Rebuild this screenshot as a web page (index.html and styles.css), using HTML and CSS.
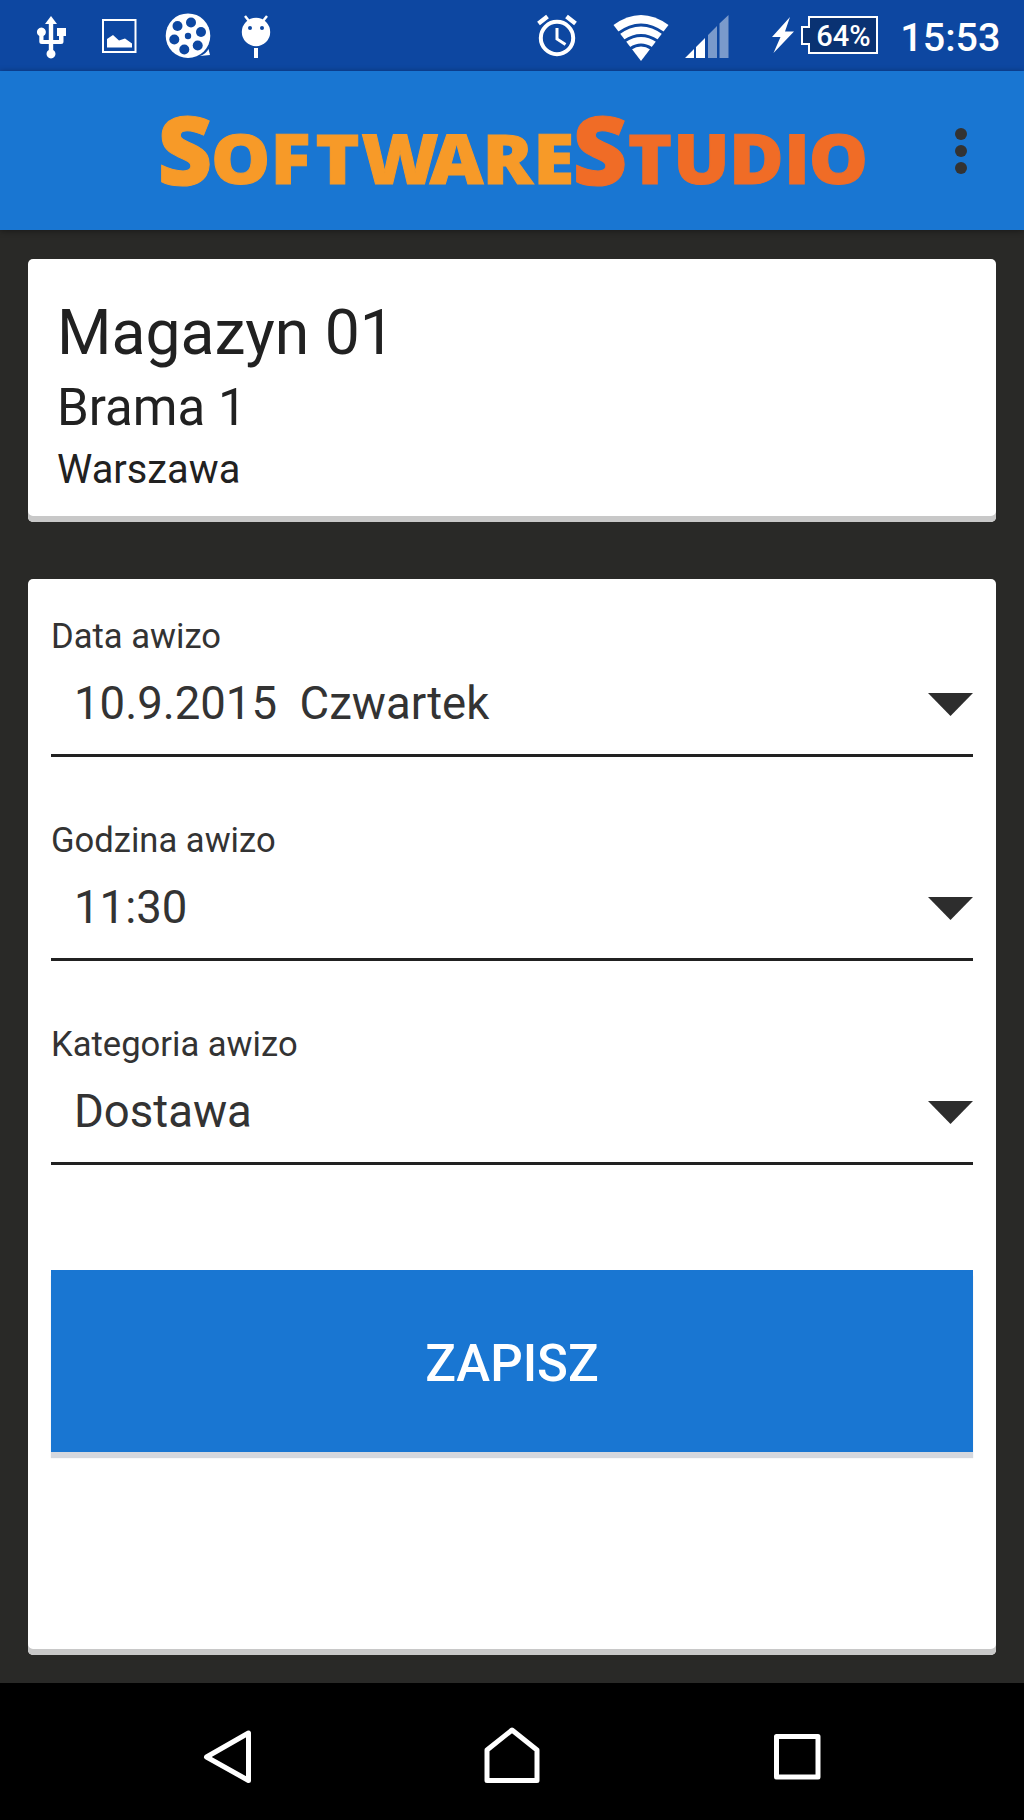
FILE: index.html
```html
<!DOCTYPE html>
<html lang="pl">
<head>
  <meta charset="UTF-8" />
  <meta name="viewport" content="width=device-width, initial-scale=1.0" />
  <title>Awizo - SoftwareStudio</title>
  <link rel="stylesheet" href="styles.css">
</head>
<body>
  <div class="status-bar">
    <svg class="status-icons" width="300" height="71" viewBox="0 0 300 71" fill="#fff">
      <!-- usb -->
      <path d="M51 16l6 8h-3.800v16h5.800v-4h-2v-8h9v8h-2.500v5.500q0 2.500-2.500 2.500h-7.800v6a4.500 4.500 0 1 1-4.400 0v-6h-7q-2.500 0-2.500-2.500v-5.500a4.500 4.500 0 1 1 4.200 0v4h5.300v-16h-3.800z"/>
      <!-- picture -->
      <rect x="103" y="20" width="32.500" height="32" fill="none" stroke="#fff" stroke-width="2"/>
      <path d="M107 47.500v-8.500l6-4 6 5.500 6-2 7 5v4z"/>
      <!-- film reel -->
      <circle cx="188" cy="35.700" r="22.300"/>
      <path d="M200 56q6-2 8.500-7l1.500 6z"/>
      <g fill="#0d47a1">
        <circle cx="191" cy="22.500" r="5"/>
        <circle cx="201" cy="32" r="5"/>
        <circle cx="197.700" cy="45.500" r="5"/>
        <circle cx="184.300" cy="49.500" r="5"/>
        <circle cx="174.300" cy="39.500" r="5"/>
        <circle cx="177.500" cy="26" r="5"/>
        <circle cx="188" cy="36" r="3.200"/>
      </g>
      <!-- android on a stick -->
      <circle cx="256" cy="32" r="14.200"/>
      <path d="M245 16l4 5M267 16l-4 5" stroke="#fff" stroke-width="2.500"/>
      <path d="M256 48v10" stroke="#fff" stroke-width="4"/>
      <circle cx="250" cy="28" r="2" fill="#0d47a1"/>
      <circle cx="262" cy="28" r="2" fill="#0d47a1"/>
    </svg>

    <div class="status-right">
      <svg width="40" height="44" viewBox="0 0 40 44" fill="none" stroke="#fff">
        <circle cx="20" cy="24" r="16.200" stroke-width="4"/>
        <path d="M20 14v11l8.500 5.500" stroke-width="3"/>
        <path d="M1.500 9.500l9-7M38.500 9.500l-9-7" stroke-width="4.500"/>
      </svg>
      <svg class="wifi" width="56" height="48" viewBox="0 0 56 48">
        <path d="M28 47L.5 11Q28-9 55.500 11z" fill="#fff"/>
        <path d="M5 19.500q23-17 46 0M11.500 27q16.500-11 33 0M17.500 34.500q10.500-7 21 0" fill="none" stroke="#0d47a1" stroke-width="2.800"/>
      </svg>
      <svg class="signal" width="44" height="43" viewBox="0 0 44 43" fill="#fff">
        <path d="M0 43l9-9v9zM11 43V32l9-9v20z"/>
        <path d="M23 43V20l9-9v32zM34.500 43V8.500L43.500 0v43z" opacity=".45"/>
      </svg>
      <svg class="bolt" width="22" height="36" viewBox="0 0 22 36" fill="#fff">
        <path d="M18 0L0 20h8.500L1.500 36 22 14.500H13z"/>
      </svg>
      <div class="battery">
        <svg class="battery-frame" width="77" height="38" viewBox="0 0 77 38">
          <path d="M8 1h68v36H8v-9H1V11h7z" fill="#0a3272" stroke="#fff" stroke-width="2"/>
        </svg>
        <span class="battery-text">64%</span>
      </div>
      <span class="clock">15:53</span>
    </div>
  </div>

  <header class="app-bar">
    <svg class="logo" width="706" height="90" viewBox="0 0 706 90">
      <g class="logo-software">
        <text class="big" x="26" y="74.500">S</text>
        <text transform="scale(1.080 1)" x="75.600 121.800 165.300 223.200 275.500 323 365.500" y="74.500">OFTWARE</text>
      </g>
      <g class="logo-studio">
        <text class="big" x="441" y="74.500">S</text>
        <text transform="scale(1.080 1)" x="454.600 502.300 553 590.700 629.200" y="74.500">TUDIO</text>
      </g>
    </svg>
    <div class="menu">
      <span class="dot"></span>
      <span class="dot"></span>
      <span class="dot"></span>
    </div>
  </header>

  <main class="content">
    <section class="card place">
      <h1>Magazyn 01</h1>
      <h2>Brama 1</h2>
      <p>Warszawa</p>
    </section>

    <section class="card form">
      <div class="field">
        <div class="label">Data awizo</div>
        <div class="select"><span>10.9.2015&nbsp; Czwartek</span><i class="arrow"></i></div>
      </div>
      <div class="field">
        <div class="label">Godzina awizo</div>
        <div class="select"><span>11:30</span><i class="arrow"></i></div>
      </div>
      <div class="field">
        <div class="label">Kategoria awizo</div>
        <div class="select"><span>Dostawa</span><i class="arrow"></i></div>
      </div>
      <button type="submit">ZAPISZ</button>
    </section>
  </main>

  <nav class="nav-bar">
    <svg width="60" height="60" viewBox="0 0 60 60"><path d="M51.500 9v47.500L9.500 33z"/></svg>
    <svg width="60" height="60" viewBox="0 0 60 60"><path d="M5 56.500V26L30 6l25 20v30.500z"/></svg>
    <svg width="60" height="60" viewBox="0 0 60 60"><path d="M9.500 12.500h41.500v40.500H9.500z"/></svg>
  </nav>
</body>
</html>
```
FILE: styles.css
```css
* {
  box-sizing: border-box;
}
body {
  margin: 0;
  width: 1024px;
  height: 1820px;
  display: flex;
  flex-direction: column;
  font-family: Roboto, sans-serif;
  background: #292927;
  color: #212121;
  overflow: hidden;
}
svg {
  display: block;
}

/* system status bar */
.status-bar {
  height: 71px;
  display: flex;
  justify-content: space-between;
  background: #0d47a1;
  color: #fff;
}
.status-right {
  display: flex;
  align-items: flex-start;
  padding-top: 14px;
  padding-right: 23.5px;
}
.wifi {
  margin-left: 36px;
}
.signal {
  margin-top: 1px;
  margin-left: 16px;
}
.bolt {
  margin-top: 3px;
  margin-left: 43px;
}
.battery {
  position: relative;
  width: 77px;
  margin-top: 2px;
  margin-left: 7.5px;
}
.battery-text {
  position: absolute;
  top: 3px;
  left: 15px;
  font-size: 29px;
  line-height: 34px;
  font-weight: 500;
}
.clock {
  margin-left: 22px;
  font-size: 39.5px;
  line-height: 47px;
  font-weight: 500;
}

/* app bar */
.app-bar {
  height: 159px;
  display: flex;
  align-items: flex-start;
  justify-content: space-between;
  padding: 39px 57px 0 159px;
  background: #1976d2;
  box-shadow: 0 1px 6px rgba(0, 0, 0, 0.4);
}
.logo {
  overflow: visible;
  font-family: 'Open Sans', sans-serif;
  font-weight: 800;
  font-size: 69px;
  text-anchor: middle;
  stroke-width: 1px;
}
.logo .big {
  font-size: 95px;
}
.logo-software {
  fill: #f79a28;
  stroke: #f79a28;
}
.logo-studio {
  fill: #f06c26;
  stroke: #f06c26;
}
.menu {
  display: flex;
  flex-direction: column;
  gap: 5px;
  padding-top: 18px;
}
.dot {
  width: 12px;
  height: 12px;
  border-radius: 50%;
  background: #333;
}

/* cards */
.content {
  flex: 1;
  padding: 29px 28.5px 28px 28px;
  display: flex;
  flex-direction: column;
  gap: 57px;
}
.card {
  background: #fff;
  border-radius: 5px;
  box-shadow: inset 0 -6px #c8c8c8;
}
.place {
  height: 263px;
  padding: 37px 29px 0;
}
.place h1, .place h2, .place p {
  margin: 0;
  font-weight: 400;
}
.place h1 {
  font-size: 62.4px;
  line-height: 74px;
}
.place h2 {
  margin-top: 8px;
  font-size: 51px;
  line-height: 60px;
}
.place p {
  margin-top: 9px;
  font-size: 39.8px;
  line-height: 46px;
}

/* form */
.form {
  flex: 1;
  padding: 37px 22.5px 0 23px;
}
.field {
  margin-bottom: 63px;
  color: #333;
}
.label {
  font-size: 34.6px;
  line-height: 40px;
}
.select {
  display: flex;
  justify-content: space-between;
  padding: 21px 0 23px 23px;
  border-bottom: 3px solid #212121;
  font-size: 45.5px;
  line-height: 54px;
}
.arrow {
  width: 45px;
  height: 23px;
  margin-top: 16px;
  background: #2d2d2d;
  clip-path: polygon(0 0, 100% 0, 50% 100%);
}
.field:nth-of-type(3) {
  margin-bottom: 105px;
}
button {
  display: block;
  width: 100%;
  height: 182px;
  padding: 5px 0 0;
  border: none;
  background: #1976d2;
  box-shadow: 0 6px 1px #d5d8de;
  color: #fff;
  font-family: inherit;
  font-size: 51px;
  font-weight: 500;
}

/* navigation bar */
.nav-bar {
  height: 137px;
  display: flex;
  justify-content: space-between;
  padding: 41px 197px 0;
  background: #000;
}
.nav-bar path {
  fill: none;
  stroke: #fff;
  stroke-width: 5;
  stroke-linejoin: round;
}
```
